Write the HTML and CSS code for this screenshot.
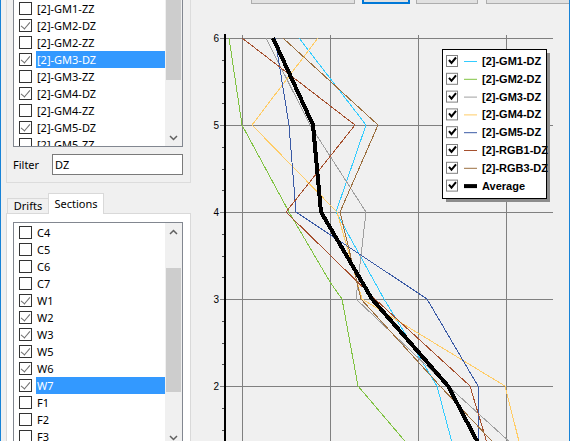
FILE: index.html
```html
<!DOCTYPE html>
<html lang="en">
<head>
  <meta charset="UTF-8" />
  <title>Drift profiles</title>
  <link rel="stylesheet" href="styles.css">
</head>
<body>
  <div class="window">
    <aside class="sidebar">
      <div class="group">
        <div class="listbox top-list">
          <ul class="items">
            <li class="item"><span class="box"></span><span class="label">[2]-GM1-ZZ</span></li>
            <li class="item"><span class="box on"></span><span class="label">[2]-GM2-DZ</span></li>
            <li class="item"><span class="box"></span><span class="label">[2]-GM2-ZZ</span></li>
            <li class="item selected"><span class="box on"></span><span class="label">[2]-GM3-DZ</span></li>
            <li class="item"><span class="box"></span><span class="label">[2]-GM3-ZZ</span></li>
            <li class="item"><span class="box on"></span><span class="label">[2]-GM4-DZ</span></li>
            <li class="item"><span class="box"></span><span class="label">[2]-GM4-ZZ</span></li>
            <li class="item"><span class="box on"></span><span class="label">[2]-GM5-DZ</span></li>
            <li class="item"><span class="box"></span><span class="label">[2]-GM5-ZZ</span></li>
          </ul>
          <div class="scrollbar">
            <div class="thumb"></div>
            <div class="track"></div>
            <div class="arrow">
              <svg width="9" height="6"><polyline points="1,1 4.5,4.5 8,1" fill="none" stroke="#606060" stroke-width="1.5"/></svg>
            </div>
          </div>
        </div>
        <div class="filter">
          <span class="filter-label">Filter</span>
          <div class="textbox">DZ</div>
        </div>
      </div>

      <div class="tabs">
        <div class="tab">Drifts</div>
        <div class="tab active">Sections</div>
      </div>
      <div class="tab-panel">
        <div class="listbox bottom-list">
          <ul class="items">
            <li class="item"><span class="box"></span><span class="label">C4</span></li>
            <li class="item"><span class="box"></span><span class="label">C5</span></li>
            <li class="item"><span class="box"></span><span class="label">C6</span></li>
            <li class="item"><span class="box"></span><span class="label">C7</span></li>
            <li class="item"><span class="box on"></span><span class="label">W1</span></li>
            <li class="item"><span class="box on"></span><span class="label">W2</span></li>
            <li class="item"><span class="box on"></span><span class="label">W3</span></li>
            <li class="item"><span class="box on"></span><span class="label">W5</span></li>
            <li class="item"><span class="box on"></span><span class="label">W6</span></li>
            <li class="item selected"><span class="box on"></span><span class="label">W7</span></li>
            <li class="item"><span class="box"></span><span class="label">F1</span></li>
            <li class="item"><span class="box"></span><span class="label">F2</span></li>
            <li class="item"><span class="box"></span><span class="label">F3</span></li>
          </ul>
          <div class="scrollbar">
            <div class="arrow">
              <svg width="9" height="6"><polyline points="1,5 4.5,1.5 8,5" fill="none" stroke="#606060" stroke-width="1.5"/></svg>
            </div>
            <div class="gap"></div>
            <div class="thumb"></div>
            <div class="track"></div>
            <div class="arrow">
              <svg width="9" height="6"><polyline points="1,1 4.5,4.5 8,1" fill="none" stroke="#606060" stroke-width="1.5"/></svg>
            </div>
          </div>
        </div>
      </div>
    </aside>

    <main class="main">
      <div class="toolbar">
        <button class="btn b1"></button>
        <button class="btn b2 focus"></button>
        <button class="btn b3"></button>
        <button class="btn b4"></button>
      </div>

      <svg class="chart" width="378" height="433" viewBox="191 8 378 433">
        <!-- grid -->
        <g stroke="#808080" stroke-width="1">
          <line x1="226" y1="38.5" x2="553" y2="38.5"/>
          <line x1="226" y1="125.5" x2="553" y2="125.5"/>
          <line x1="226" y1="212.5" x2="553" y2="212.5"/>
          <line x1="226" y1="299.5" x2="553" y2="299.5"/>
          <line x1="226" y1="386.5" x2="553" y2="386.5"/>
          <line x1="242.5" y1="35" x2="242.5" y2="441"/>
          <line x1="330.5" y1="35" x2="330.5" y2="441"/>
          <line x1="418.5" y1="35" x2="418.5" y2="441"/>
          <line x1="506.5" y1="35" x2="506.5" y2="441"/>
          <!-- major ticks -->
          <line x1="220" y1="38.5" x2="224" y2="38.5"/>
          <line x1="220" y1="125.5" x2="224" y2="125.5"/>
          <line x1="220" y1="212.5" x2="224" y2="212.5"/>
          <line x1="220" y1="299.5" x2="224" y2="299.5"/>
          <line x1="220" y1="386.5" x2="224" y2="386.5"/>
        </g>
        <!-- minor ticks -->
        <g stroke="#505050" stroke-width="1">
          <line x1="222" y1="60.5" x2="224" y2="60.5"/>
          <line x1="222" y1="82.5" x2="224" y2="82.5"/>
          <line x1="222" y1="103.5" x2="224" y2="103.5"/>
          <line x1="222" y1="147.5" x2="224" y2="147.5"/>
          <line x1="222" y1="169.5" x2="224" y2="169.5"/>
          <line x1="222" y1="190.5" x2="224" y2="190.5"/>
          <line x1="222" y1="234.5" x2="224" y2="234.5"/>
          <line x1="222" y1="256.5" x2="224" y2="256.5"/>
          <line x1="222" y1="277.5" x2="224" y2="277.5"/>
          <line x1="222" y1="321.5" x2="224" y2="321.5"/>
          <line x1="222" y1="343.5" x2="224" y2="343.5"/>
          <line x1="222" y1="364.5" x2="224" y2="364.5"/>
          <line x1="222" y1="408.5" x2="224" y2="408.5"/>
          <line x1="222" y1="430.5" x2="224" y2="430.5"/>
        </g>
        <rect x="224" y="34" width="2" height="407" fill="#000"/>
        <g class="tick-label">
          <text x="219" y="42">6</text>
          <text x="219" y="129">5</text>
          <text x="219" y="216">4</text>
          <text x="219" y="303">3</text>
          <text x="219" y="390">2</text>
        </g>

        <!-- series -->
        <g fill="none" stroke-width="1" shape-rendering="crispEdges">
          <polyline stroke="#33ccff" points="299,38 366,125 336,212 384,299 437,386 460,473"/>
          <polyline stroke="#80c342" points="229,38 242,125 289,212 330,282 342,299 358,386 432,473"/>
          <polyline stroke="#a0a0a0" points="266,38 310,125 366,212 356,299 448,386 544,473"/>
          <polyline stroke="#ffcc66" points="318,38 252,125 337,212 362,299 505,386 527,473"/>
          <polyline stroke="#3a5aa5" points="275,38 289,125 296,212 427,299 478,386 478,473"/>
          <polyline stroke="#a5502e" points="242,38 355,125 286,212 375,299 470,386 496,473"/>
          <polyline stroke="#9c7040" points="283,38 378,125 340,212 361,299 440,386 522,473"/>
          <polyline stroke="#000" stroke-width="4" points="273,38 313,125 321,212 372,299 448,386 494,473"/>
        </g>

        <!-- legend -->
        <rect x="446" y="53" width="104" height="149" fill="#8c8c8c"/>
        <rect x="442.5" y="49.5" width="104" height="149" fill="#fff" stroke="#000"/>
        <g class="legend">
          <g transform="translate(0 61)">
            <rect class="lg-box" x="446.5" y="-5.5" width="11" height="11"/>
            <polyline class="lg-check" points="449,-1 451.5,2 456,-3.5"/>
            <line x1="464" y1="0.5" x2="477" y2="0.5" stroke="#33ccff"/>
            <text x="482" y="4">[2]-GM1-DZ</text>
          </g>
          <g transform="translate(0 78.8)">
            <rect class="lg-box" x="446.5" y="-5.5" width="11" height="11"/>
            <polyline class="lg-check" points="449,-1 451.5,2 456,-3.5"/>
            <line x1="464" y1="0.5" x2="477" y2="0.5" stroke="#80c342"/>
            <text x="482" y="4">[2]-GM2-DZ</text>
          </g>
          <g transform="translate(0 96.6)">
            <rect class="lg-box" x="446.5" y="-5.5" width="11" height="11"/>
            <polyline class="lg-check" points="449,-1 451.5,2 456,-3.5"/>
            <line x1="464" y1="0.5" x2="477" y2="0.5" stroke="#a0a0a0"/>
            <text x="482" y="4">[2]-GM3-DZ</text>
          </g>
          <g transform="translate(0 114.4)">
            <rect class="lg-box" x="446.5" y="-5.5" width="11" height="11"/>
            <polyline class="lg-check" points="449,-1 451.5,2 456,-3.5"/>
            <line x1="464" y1="0.5" x2="477" y2="0.5" stroke="#ffcc66"/>
            <text x="482" y="4">[2]-GM4-DZ</text>
          </g>
          <g transform="translate(0 132.2)">
            <rect class="lg-box" x="446.5" y="-5.5" width="11" height="11"/>
            <polyline class="lg-check" points="449,-1 451.5,2 456,-3.5"/>
            <line x1="464" y1="0.5" x2="477" y2="0.5" stroke="#3a5aa5"/>
            <text x="482" y="4">[2]-GM5-DZ</text>
          </g>
          <g transform="translate(0 150)">
            <rect class="lg-box" x="446.5" y="-5.5" width="11" height="11"/>
            <polyline class="lg-check" points="449,-1 451.5,2 456,-3.5"/>
            <line x1="464" y1="0.5" x2="477" y2="0.5" stroke="#a5502e"/>
            <text x="482" y="4">[2]-RGB1-DZ</text>
          </g>
          <g transform="translate(0 167.8)">
            <rect class="lg-box" x="446.5" y="-5.5" width="11" height="11"/>
            <polyline class="lg-check" points="449,-1 451.5,2 456,-3.5"/>
            <line x1="464" y1="0.5" x2="477" y2="0.5" stroke="#9c7040"/>
            <text x="482" y="4">[2]-RGB3-DZ</text>
          </g>
          <g transform="translate(0 185.6)">
            <rect class="lg-box" x="446.5" y="-5.5" width="11" height="11"/>
            <polyline class="lg-check" points="449,-1 451.5,2 456,-3.5"/>
            <rect x="464" y="-1.5" width="13" height="4" fill="#000"/>
            <text x="482" y="4">Average</text>
          </g>
        </g>
      </svg>
    </main>
  </div>
</body>
</html>
```

FILE: styles.css
```css
* {
  box-sizing: border-box;
}

body {
  margin: 0;
  background-color: #f0f0f0;
  font-family: "Noto Sans", "DejaVu Sans", sans-serif;
  font-size: 11px;
  color: #000;
  overflow: hidden;
}

.window {
  display: flex;
  width: 570px;
  height: 441px;
  border-left: 1px solid #1883d7;
  border-right: 1px solid #1883d7;
  overflow: hidden;
}

/* Left column: trace list + sections */
.sidebar {
  width: 190px;
  flex: none;
  display: flex;
  flex-direction: column;
}

.group {
  margin-left: 5px;
  width: 185px;
  border: 1px solid #dcdcdc;
  border-top: 0;
  padding: 0 7px 7px 6px;
}

.listbox {
  display: flex;
  background-color: #fff;
  border: 1px solid #828790;
}

.top-list {
  height: 147px;
  border-top: 0;
}

.bottom-list {
  height: 225px;
}

.items {
  list-style: none;
  margin: 0;
  padding: 0;
  flex: 1;
  overflow: hidden;
}

.bottom-list .items {
  padding-top: 1px;
}

.item {
  display: flex;
  align-items: center;
  height: 17px;
  padding-left: 5px;
}

.box {
  position: relative;
  flex: none;
  width: 13px;
  height: 13px;
  margin-right: 4px;
  border: 1px solid #333;
  background-color: #fff;
}

.box.on::after {
  content: "";
  position: absolute;
  left: 3px;
  top: 0;
  width: 4px;
  height: 8px;
  border: solid #6d6d6d;
  border-width: 0 1px 1px 0;
  transform: rotate(40deg);
}

.label {
  flex: 1;
  height: 17px;
  line-height: 17px;
  padding-left: 1px;
  white-space: nowrap;
}

.item.selected .label {
  background-color: #3399ff;
  color: #fff;
}

.scrollbar {
  width: 17px;
  flex: none;
  display: flex;
  flex-direction: column;
  background-color: #f0f0f0;
}

.thumb {
  margin: 0 1px;
  background-color: #cdcdcd;
}

.top-list .thumb {
  height: 80px;
}

.bottom-list .thumb {
  height: 124px;
}

.gap {
  height: 28px;
}

.track {
  flex: 1;
}

.arrow {
  height: 17px;
  display: flex;
  align-items: center;
  justify-content: center;
}

.filter {
  display: flex;
  align-items: center;
  margin-top: 7px;
}

.filter-label {
  width: 39px;
}

.textbox {
  flex: 1;
  height: 21px;
  line-height: 19px;
  padding-left: 2px;
  border: 1px solid #7a7a7a;
  background-color: #fff;
}

.tabs {
  display: flex;
  align-items: flex-end;
  height: 20px;
  margin: 10px 0 0 6px;
}

.tab {
  height: 15px;
  line-height: 13px;
  width: 42px;
  text-align: center;
  border: 1px solid #d9d9d9;
  border-bottom: 0;
  background-color: #f0f0f0;
}

.tab.active {
  position: relative;
  z-index: 1;
  width: 56px;
  height: 21px;
  line-height: 19px;
  margin-left: -1px;
  margin-bottom: -1px;
  background-color: #fff;
}

.tab-panel {
  flex: 1;
  margin-left: 5px;
  width: 185px;
  border: 1px solid #d9d9d9;
  background-color: #fff;
  padding: 8px 7px 0 6px;
}

/* Right column: chart */
.main {
  flex: 1;
  display: flex;
  flex-direction: column;
  overflow: hidden;
}

.toolbar {
  display: flex;
  height: 8px;
  padding-left: 60px;
}

.btn {
  flex: none;
  height: 20px;
  margin-top: -16px;
  padding: 0;
  border: 1px solid #adadad;
  background-color: #e1e1e1;
}

.b1 { width: 104px; }
.b2 { width: 48px; margin-left: 7px; }
.b3 { width: 62px; margin-left: 6px; }
.b4 { width: 90px; margin-left: 8px; }

.btn.focus {
  border: 2px solid #0078d7;
}

.chart {
  display: block;
  flex: none;
}

.tick-label text {
  font-family: "Liberation Sans", Arial, sans-serif;
  font-size: 10px;
  text-anchor: end;
}

.legend text {
  font-family: "Liberation Sans", Arial, sans-serif;
  font-size: 11px;
  font-weight: bold;
}

.lg-box {
  fill: #fff;
  stroke: #808080;
}

.lg-check {
  fill: none;
  stroke: #000;
  stroke-width: 2;
}
```
